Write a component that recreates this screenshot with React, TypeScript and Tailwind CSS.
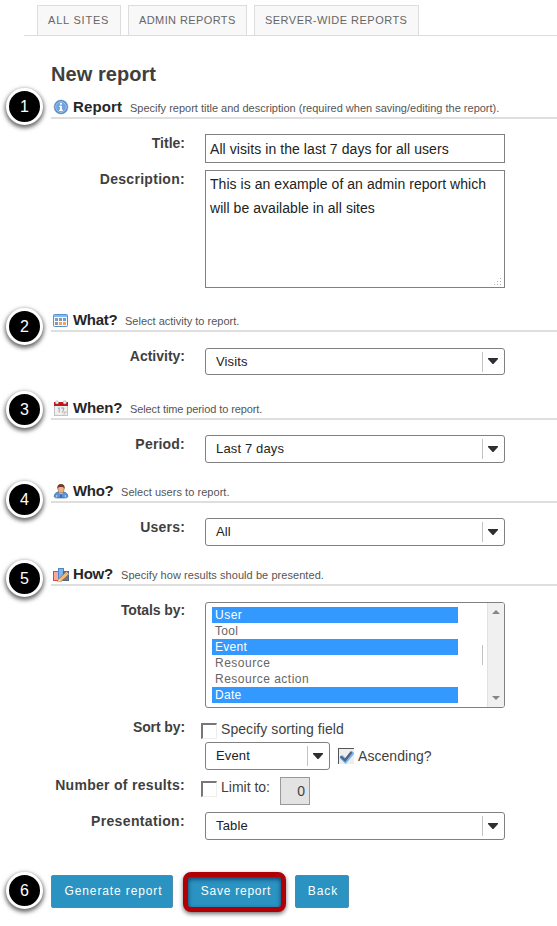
import React from 'react';

function Badge({ n, pos }: { n: number; pos: string }) {
  return (
    <span
      className={`absolute flex h-[37px] w-[37px] items-center justify-center rounded-full border-[3px] border-white bg-black text-[16px] leading-none text-white shadow-[0_2px_4px_1px_rgba(0,0,0,0.6)] ${pos}`}
    >
      {n}
    </span>
  );
}

function InfoIcon() {
  return (
    <svg width="16" height="16" viewBox="0 0 16 16">
      <circle cx="8" cy="8" r="6.9" fill="#4b83c4" stroke="#6d8fba" strokeWidth="0.6" />
      <circle cx="8" cy="8" r="5.4" fill="#6fa5dc" stroke="#c3d8ee" strokeWidth="0.7" />
      <rect x="7" y="3.9" width="2" height="1.7" fill="#fff" />
      <path d="M6.2 6.7h2.7v4h1v1.2H6.1v-1.2H7V7.9h-.8z" fill="#fff" />
    </svg>
  );
}

function TableIcon() {
  return (
    <svg width="16" height="16" viewBox="0 0 16 16">
      <rect x="0.5" y="2.5" width="14" height="12" rx="0.8" fill="#f4f9ff" stroke="#5c8fc9" />
      <rect x="1" y="3" width="13" height="2" fill="#7dbcf8" />
      <g fill="#8b98a8">
        <rect x="2" y="6" width="3" height="3" />
        <rect x="6" y="6" width="3" height="3" />
        <rect x="10" y="6" width="3" height="3" fill="#6e9dd2" />
        <rect x="2" y="10" width="3" height="3" />
      </g>
      <g fill="#f2a45c">
        <rect x="6" y="10" width="3" height="3" />
        <rect x="10" y="10" width="3" height="3" />
      </g>
    </svg>
  );
}

function CalendarIcon() {
  return (
    <svg width="16" height="16" viewBox="0 0 16 16">
      <rect x="1.5" y="3" width="13" height="12.5" fill="#efefef" stroke="#b5b5b5" strokeWidth="0.8" />
      <rect x="1" y="2" width="14" height="4" fill="#c3141b" />
      <circle cx="4" cy="2.4" r="1.6" fill="#eee" stroke="#999" strokeWidth="0.5" />
      <circle cx="11.8" cy="2.4" r="1.6" fill="#eee" stroke="#999" strokeWidth="0.5" />
      <path d="M5 8.5l1.2-.8v4.800M8 8h3l-1.6 4.500" fill="none" stroke="#999" strokeWidth="0.9" />
      <path d="M10.5 15.2v-3.600h4z" fill="#c9c9c9" />
    </svg>
  );
}

function UserIcon() {
  return (
    <svg width="16" height="16" viewBox="0 0 16 16">
      <path d="M1.2 13.6C1.2 10.8 3 9.4 5.5 9h5c2.5.4 4.3 1.8 4.3 4.6-.5 1.1-1.5 1.3-2.8 1.3H4c-1.3 0-2.3-.2-2.8-1.3z" fill="#5b95d5" stroke="#39699f" strokeWidth="0.8" />
      <path d="M5.8 9.2L8 12l2.2-2.8z" fill="#fff" />
      <ellipse cx="8" cy="6" rx="3.2" ry="4" fill="#eab38a" stroke="#9a5a34" strokeWidth="0.5" />
      <path d="M4.3 6C3.9 2.8 5.4 1 8 1s4.100 1.800 3.700 5C10.800 3.900 9.800 4 8 4s-2.800 0-3.700 2z" fill="#743a26" />
      <path d="M7.400 10.400h1.200l.6 3.800H6.800z" fill="#376fae" />
      <path d="M3.700 12v2.600M12.300 12v2.600" stroke="#b9d5f2" strokeWidth="0.9" />
    </svg>
  );
}

function ChartIcon() {
  return (
    <svg width="16" height="16" viewBox="0 0 16 16">
      <rect x="0.5" y="5.5" width="5" height="9" fill="#f9a69d" stroke="#d34b3f" />
      <rect x="5.5" y="2.5" width="5" height="12" fill="#7db5ee" stroke="#4f88c8" />
      <rect x="10.5" y="5.500" width="5" height="9" fill="#75787b" stroke="#49688b" />
      <path d="M5.800 12.800l6.800-6.300 2.500 2.600-6.800 6.200-3.400.5z" fill="#f7ba73" stroke="#a95f25" strokeWidth="0.700" />
      <path d="M12.600 6.500l1-.8 2.200 2.500-.8.900z" fill="#ead3c8" />
      <path d="M5.800 12.800l2.500 2.500-3.400.5z" fill="#f7dfb6" />
    </svg>
  );
}

interface SectionProps {
  n: number;
  pos: string;
  icon: React.ReactNode;
  title: string;
  titleCls: string;
  hint: string;
  hintCls?: string;
  className: string;
  children: React.ReactNode;
}

function Section({ n, pos, icon, title, titleCls, hint, hintCls = '', className, children }: SectionProps) {
  return (
    <section className={`relative shrink-0 ${className}`}>
      <Badge n={n} pos={pos} />
      <div className="ml-[51px] flex h-[22px] border-b-2 border-[#dedede] pl-[2px]">
        <span className="mt-[2px] h-4 w-4 shrink-0">{icon}</span>
        <h2 className={`ml-[4px] shrink-0 text-[15px] leading-[19px] font-bold whitespace-nowrap text-[#262626] ${titleCls}`}>{title}</h2>
        <span className={`pt-[2px] text-[11px] leading-[19px] whitespace-nowrap text-[#555] ${hintCls}`}>{hint}</span>
      </div>
      {children}
    </section>
  );
}

interface FieldProps {
  label: string;
  labelCls?: string;
  className?: string;
  children: React.ReactNode;
}

function Field({ label, labelCls = 'tracking-[0.2px]', className = '', children }: FieldProps) {
  return (
    <div className={`flex items-start ${className}`}>
      <label className={`w-[185px] shrink-0 text-right text-[14px] leading-[18px] font-bold text-[#3f3f3f] ${labelCls}`}>
        {label}
      </label>
      <div className="ml-[20px]">{children}</div>
    </div>
  );
}

function Select({ value, className }: { value: string; className: string }) {
  return (
    <div className={`flex items-center rounded-[3px] border border-[#808080] bg-white pl-[10px] text-[13px] text-[#222] ${className}`}>
      <span className="flex-1 tracking-[0.15px]">{value}</span>
      <span className="h-5 w-px bg-[#c3c3c3]" />
      <span className="flex w-[21px] pb-px pl-[5px]">
        <svg width="10" height="6" viewBox="0 0 10 6">
          <path d="M0 0h10v1L5.500 6h-1L0 1z" fill="#2e2e35" />
        </svg>
      </span>
    </div>
  );
}

function Check({ on = false }: { on?: boolean }) {
  return (
    <span
      className={
        on
          ? 'block h-4 w-4 border-t border-l border-[#555] bg-[#eee]'
          : 'block h-4 w-4 border-t-2 border-l-2 border-r border-b border-t-[#777] border-l-[#777] border-r-[#eee] border-b-[#eee] bg-white'
      }
    >
      {on && (
        <svg width="15" height="15" viewBox="0 0 15 15">
          <path d="M2 7.500l4.500 4.500 7.500-9" fill="none" stroke="#74b6f0" strokeWidth="4" />
          <path d="M1.500 7.300l4.500 4L12.500 3" fill="none" stroke="#56627a" strokeWidth="2.200" />
        </svg>
      )}
    </span>
  );
}

const tabs = [
  { name: 'ALL SITES', cls: 'w-[84px] tracking-[0.8px]' },
  { name: 'ADMIN REPORTS', cls: 'w-[119px] tracking-[0.4px]' },
  { name: 'SERVER-WIDE REPORTS', cls: 'w-[165px] tracking-[0.47px]' },
];

const totals = [
  { name: 'User', on: true, cls: 'tracking-[0.5px]' },
  { name: 'Tool', on: false, cls: 'tracking-[0.3px]' },
  { name: 'Event', on: true, cls: 'tracking-[0.3px]' },
  { name: 'Resource', on: false, cls: 'tracking-[0.5px]' },
  { name: 'Resource action', on: false, cls: 'tracking-[0.5px]' },
  { name: 'Date', on: true, cls: 'tracking-[0.3px]' },
];

export default function App() {
  return (
    <div className="flex h-[926px] w-[557px] flex-col overflow-hidden bg-white font-['Liberation_Sans',Arial,sans-serif]">
      <nav className="ml-[24px] flex h-[36px] shrink-0 gap-[7px] border-b border-[#ddd] pt-[5px] pl-[13px]">
        {tabs.map((t) => (
          <div
            key={t.name}
            className={`h-[30px] border border-b-0 border-[#ddd] bg-[#f8f8f8] pt-[5px] pl-[10px] text-[11px] leading-[18px] whitespace-nowrap text-[#666] ${t.cls}`}
          >
            {t.name}
          </div>
        ))}
      </nav>
      <h1 className="ml-[51px] h-[61px] shrink-0 pt-[26px] text-[20px] leading-[24px] font-bold tracking-[0.05px] text-[#3f3f3f]">New report</h1>

      <Section n={1} pos="left-[6px] top-[-9px]" className="h-[213px]" icon={<InfoIcon />} title="Report" titleCls="w-[57px] tracking-[0.15px]" hint="Specify report title and description (required when saving/editing the report).">
        <Field label="Title:" labelCls="tracking-[0px]" className="mt-[15px] h-[36px]">
          <div className="h-[29px] w-[300px] border border-[#808080] pl-[4px] text-[14px] leading-[28px] tracking-[0.07px] text-[#222]">
            All visits in the last 7 days for all users
          </div>
        </Field>
        <Field label="Description:" labelCls="tracking-[0.3px]">
          <div className="relative h-[118px] w-[300px] border border-[#808080] pt-[1px] pl-[4px] text-[14px] leading-[24px] tracking-[0.05px] text-[#222]">
            This is an example of an admin report which
            <br />
            will be available in all sites
            <svg className="absolute right-[2px] bottom-[1px]" width="8" height="8" viewBox="0 0 8 8" fill="#aaa">
              <path d="M6 0h1v1H6zM3 3h1v1H3zM6 3h1v1H6zM0 6h1v1H0zM3 6h1v1H3zM6 6h1v1H6z" />
            </svg>
          </div>
        </Field>
      </Section>

      <Section n={2} pos="left-[6px] top-[-2px]" className="h-[88px]" icon={<TableIcon />} title="What?" titleCls="w-[52px] tracking-[-0.3px]" hint="Select activity to report.">
        <Field label="Activity:" labelCls="-mt-px tracking-[0px]" className="pt-[16px]">
          <Select value="Visits" className="h-[27px] w-[300px]" />
        </Field>
      </Section>

      <Section n={3} pos="left-[6px] top-[-7px]" className="h-[83px]" icon={<CalendarIcon />} title="When?" titleCls="w-[57px] tracking-[-0.15px]" hint="Select time period to report." hintCls="tracking-[-0.1px]">
        <Field label="Period:" className="pt-[15px]">
          <Select value="Last 7 days" className="h-[28px] w-[300px]" />
        </Field>
      </Section>

      <Section n={4} pos="left-[6px] top-[0px]" className="h-[83px]" icon={<UserIcon />} title="Who?" titleCls="w-[48px] tracking-[-0.3px]" hint="Select users to report." hintCls="tracking-[0.04px]">
        <Field label="Users:" className="pt-[15px]">
          <Select value="All" className="h-[28px] w-[300px]" />
        </Field>
      </Section>

      <Section n={5} pos="left-[6px] top-[-4px]" className="h-[311px]" icon={<ChartIcon />} title="How?" titleCls="w-[48px] tracking-[-0.2px]" hint="Specify how results should be presented." hintCls="tracking-[0.06px]">
        <Field label="Totals by:" labelCls="-mt-px tracking-[-0.1px]" className="h-[133px] pt-[16px]">
          <div className="flex h-[106px] w-[300px] overflow-hidden rounded-[3px] border border-[#808080] bg-white">
            <ul className="mt-[4px] ml-[6px] w-[246px] text-[12px] leading-[16px]">
              {totals.map((t) => (
                <li key={t.name} className={`h-4 pl-[3px] ${t.on ? 'bg-[#3399ff] text-white' : 'text-[#666]'} ${t.cls}`}>
                  {t.name}
                </li>
              ))}
            </ul>
            <span className="mt-[42px] ml-[24px] h-5 w-px bg-[#c3c3c3]" />
            <div className="ml-auto flex w-[17px] flex-col items-center justify-between border-l border-[#e2e2e2] bg-[#f0f0f0] py-[7px]">
              <svg width="8" height="4" viewBox="0 0 8 4"><path d="M4 0l4 4H0z" fill="#858585" /></svg>
              <svg width="8" height="4" viewBox="0 0 8 4"><path d="M0 0h8L4 4z" fill="#858585" /></svg>
            </div>
          </div>
        </Field>
        <Field label="Sort by:" labelCls="-mt-px tracking-[-0.1px]" className="h-[58px]">
          <div className="-ml-1 flex h-[23px] items-start pt-[4px] text-[14px] leading-[16px] text-[#3f3f3f]">
            <Check />
            <span className="-mt-[2px] ml-[4px] tracking-[0.07px]">Specify sorting field</span>
          </div>
          <div className="flex items-start">
            <Select value="Event" className="h-[28px] w-[125px]" />
            <span className="mt-[6px] ml-[8px]"><Check on /></span>
            <span className="mt-[6px] ml-[4px] text-[14px] leading-[16px] tracking-[0.05px] text-[#3f3f3f]">Ascending?</span>
          </div>
        </Field>
        <Field label="Number of results:" labelCls="-mt-px tracking-[0.3px]" className="h-[35px]">
          <div className="-ml-1 flex items-start text-[14px] leading-[16px] text-[#3f3f3f]">
            <span className="mt-[4px]"><Check /></span>
            <span className="mt-[2px] ml-[4px] w-[59px]">Limit to:</span>
            <span className="h-[28px] w-[30px] border border-[#999] bg-[#e3e3e3] pr-[4px] text-right leading-[27px]">0</span>
          </div>
        </Field>
        <Field label="Presentation:" labelCls="tracking-[0.35px]">
          <Select value="Table" className="h-[28px] w-[300px]" />
        </Field>
      </Section>

      <footer className="relative flex h-[51px] shrink-0 items-start pl-[51px] text-[12px] leading-[31px] text-white">
        <Badge n={6} pos="left-[6px] top-[-3px]" />
        <button className="h-[33px] w-[122px] rounded-[2px] border border-[#4a8bb0] bg-[#2a93c1] pl-[3px] tracking-[0.88px]">Generate report</button>
        <button className="-mt-[3px] ml-[10px] h-[40px] w-[103px] rounded-[8px] border-[5px] border-[#b00005] bg-[#2a93c1] pb-[2px] pl-[3px] leading-[28px] tracking-[0.75px] shadow-[0_2px_4px_rgba(0,0,0,0.55),inset_0_2px_4px_rgba(0,20,60,0.7)]">
          Save report
        </button>
        <button className="ml-[9px] h-[33px] w-[54px] rounded-[2px] border border-[#4a8bb0] bg-[#2a93c1] pl-[2px] tracking-[1px]">Back</button>
      </footer>
    </div>
  );
}
